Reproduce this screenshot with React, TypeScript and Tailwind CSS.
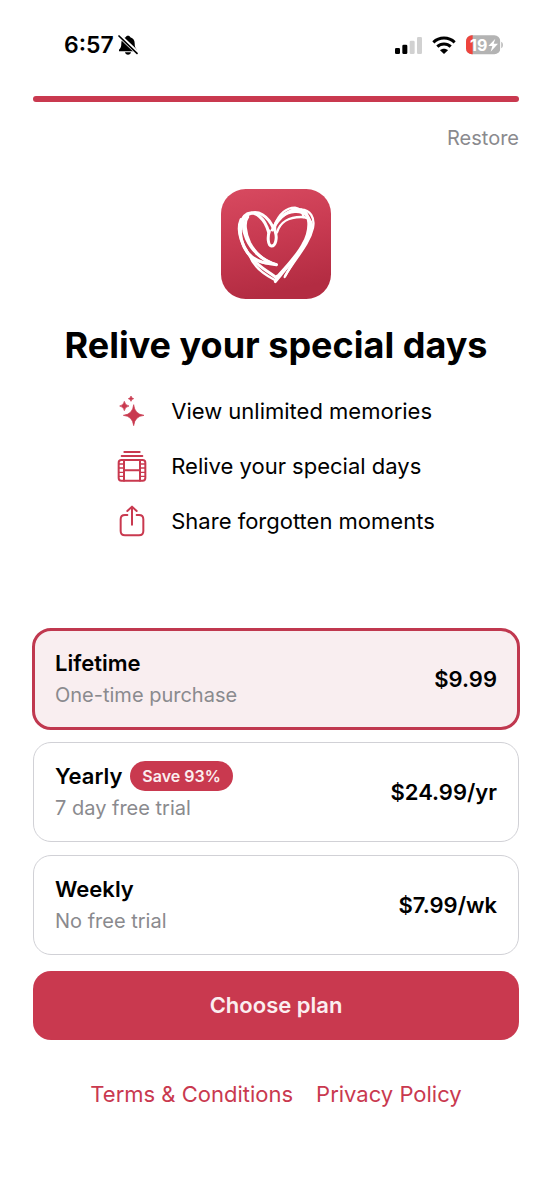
import React, { useState } from 'react';

interface Plan {
  id: string;
  name: string;
  note: string;
  price: string;
  badge?: string;
}

const PLANS: Plan[] = [
  { id: 'lifetime', name: 'Lifetime', note: 'One-time purchase', price: '$9.99' },
  { id: 'yearly', name: 'Yearly', note: '7 day free trial', price: '$24.99/yr', badge: 'Save 93%' },
  { id: 'weekly', name: 'Weekly', note: 'No free trial', price: '$7.99/wk' },
];

const BellOffIcon = () => (
  <svg viewBox="0 0 60 60" className="h-5 w-5" aria-hidden="true">
    <path d="M30 2c4 0 6 2 7 5 9 3 13 10 13 18 0 11 2 15 7 19v5H3v-5c5-4 7-8 7-19 0-8 4-15 13-18 1-3 3-5 7-5z" />
    <path d="M21 52h18c-1 4-4 7-9 7s-8-3-9-7z" />
    <path d="M3 1l56 53" stroke="#fff" strokeWidth="12" />
    <path d="M3 3l54 52" stroke="#000" strokeWidth="5" strokeLinecap="round" />
  </svg>
);

const SignalIcon = () => (
  <svg viewBox="0 0 81 51" className="h-[17px] w-[27px]" aria-hidden="true">
    <rect x="0" y="33" width="15" height="18" rx="4" />
    <rect x="22" y="23" width="15" height="28" rx="4" />
    <rect x="44" y="11" width="15" height="40" rx="4" fill="#d1d1d1" />
    <rect x="66" y="0" width="15" height="51" rx="4" fill="#d1d1d1" />
  </svg>
);

const WifiIcon = () => (
  <svg viewBox="0 0 72 54" className="h-[18px] w-6" fill="none" stroke="#000" strokeWidth="9" aria-hidden="true">
    <path d="M4 19C22 2 50 2 68 19" />
    <path d="M16 32c11-11 29-11 40 0" />
    <path d="M36 54L24 43c7-6 17-6 24 0z" fill="#000" stroke="none" />
  </svg>
);

const BatteryIcon = () => (
  <svg viewBox="0 0 114 60" className="h-5 w-[38px]" role="img" aria-label="Battery 19 percent">
    <defs>
      <clipPath id="battery">
        <rect x="0" y="1" width="103" height="57" rx="18" />
      </clipPath>
    </defs>
    <g clipPath="url(#battery)">
      <rect width="103" height="60" fill="#b3b3b3" />
      <rect width="20" height="60" fill="#ee443d" />
    </g>
    <path d="M106 20c6 2 6 17 0 20z" fill="#b3b3b3" />
    <text x="12" y="47" fontSize="48" fontWeight="700" fill="#fff" fontFamily="Inter, sans-serif">19</text>
    <path d="M88 11L67 33h12l-5 17 22-24H83z" fill="#fff" />
  </svg>
);

const AppLogo = () => (
  <svg viewBox="0 0 330 330" className="h-[110px] w-[110px]" role="img" aria-label="App logo">
    <defs>
      <linearGradient id="logo" x1="0" y1="0" x2="0.2" y2="1">
        <stop offset="0" stopColor="#d84a60" />
        <stop offset="0.5" stopColor="#c83a51" />
        <stop offset="1" stopColor="#b32c42" />
      </linearGradient>
    </defs>
    <rect width="330" height="330" rx="74" fill="url(#logo)" />
    <g fill="none" stroke="#fff" strokeWidth="9" strokeLinecap="round" strokeLinejoin="round">
      <path d="M143 130C132 88 104 66 80 74C54 88 52 136 70 176C86 208 122 224 166 227C132 217 104 196 86 162C72 132 68 98 80 84" />
      <path d="M158 120C142 80 110 60 82 76C62 88 58 104 60 120" />
      <path d="M60 92C48 120 60 158 78 188C98 222 130 240 166 266" />
      <path d="M68 86C60 132 84 172 112 198C130 214 146 222 166 227" />
      <path d="M74 180C88 214 118 222 148 224" strokeWidth="7" />
      <path d="M86 200C96 230 122 252 160 272" strokeWidth="7" />
      <path d="M145 126C139 145 141 169 151 171C164 172 169 147 163 129C158 113 163 98 179 85C205 64 240 62 258 80C274 98 268 136 250 168C230 204 198 232 176 262L163 278L168 262" />
      <path d="M154 123C173 84 206 56 240 62C268 70 272 122 246 166C228 200 198 232 168 264" />
      <path d="M160 110C174 76 196 56 222 56C236 58 244 68 248 84" strokeWidth="7" />
      <path d="M168 130C177 98 206 84 240 84C272 84 278 104 268 136C254 172 220 208 191 264" strokeWidth="7" />
      <path d="M240 62C268 62 282 86 276 116C264 168 224 206 193 260" strokeWidth="7" />
    </g>
  </svg>
);

const SparklesIcon = () => (
  <svg viewBox="0 0 90 96" className="h-8 w-[30px] shrink-0" fill="currentColor" aria-hidden="true">
    <path d="M50 29Q53 58 81 61Q53 64 50 92Q47 64 19 61Q47 58 50 29z" stroke="currentColor" strokeWidth="2" strokeLinejoin="round" />
    <path d="M22 19Q24 31 36 33Q24 35 22 47Q20 35 8 33Q20 31 22 19z" stroke="currentColor" strokeWidth="2" strokeLinejoin="round" />
    <path d="M42 3Q43 10 50 11Q43 12 42 19Q41 12 34 11Q41 10 42 3z" stroke="currentColor" strokeWidth="2" strokeLinejoin="round" />
  </svg>
);

const FilmStackIcon = () => (
  <svg viewBox="0 0 90 96" className="h-8 w-[30px] shrink-0" fill="none" stroke="currentColor" strokeWidth="6" strokeLinecap="round" aria-hidden="true">
    <path d="M22 6h46M14 18h62" />
    <rect x="5" y="30" width="80" height="62" rx="8" />
    <path d="M21 30v62M69 30v62M21 61h48" />
    <path d="M5 42h16M5 54h16M5 67h16M5 79h16M69 42h16M69 54h16M69 67h16M69 79h16" strokeWidth="4" />
  </svg>
);

const ShareIcon = () => (
  <svg viewBox="0 0 90 96" className="h-8 w-[30px] shrink-0" fill="none" stroke="currentColor" strokeWidth="6" strokeLinecap="round" strokeLinejoin="round" aria-hidden="true">
    <path d="M31 30h-7q-13 0-13 13v35q0 13 13 13h42q13 0 13-13V43q0-13-13-13h-7" />
    <path d="M45 59V6M31 18L45 5l14 13" />
  </svg>
);

const FEATURES = [
  { icon: <SparklesIcon />, text: 'View unlimited memories' },
  { icon: <FilmStackIcon />, text: 'Relive your special days' },
  { icon: <ShareIcon />, text: 'Share forgotten moments' },
];

interface PlanCardProps {
  plan: Plan;
  selected: boolean;
  onSelect: (id: string) => void;
}

const PlanCard: React.FC<PlanCardProps> = ({ plan, selected, onSelect }) => (
  <label
    className={`relative flex min-h-[100px] cursor-pointer items-center justify-between rounded-[18px] px-[22px] outline-solid ${
      selected ? 'bg-[#f9eef0] outline-3 -outline-offset-2 outline-[#c0384f]' : 'bg-white outline-1 -outline-offset-1 outline-[#d1d1d6]'
    }`}
  >
    <input
      type="radio"
      name="plan"
      value={plan.id}
      checked={selected}
      onChange={() => onSelect(plan.id)}
      className="sr-only"
    />
    <span className="flex flex-col">
      <span className="flex h-8 items-center gap-2 text-[22px] font-semibold">
        {plan.name}
        {plan.badge && (
          <span className="rounded-full bg-[#c9394f] px-3 text-base leading-[30px] font-semibold text-[#fbeef0]">
            {plan.badge}
          </span>
        )}
      </span>
      <span className="text-xl leading-8 text-[#8a8a8e]">{plan.note}</span>
    </span>
    <span className="text-[22px] font-semibold">{plan.price}</span>
  </label>
);

const App: React.FC = () => {
  const [selectedPlan, setSelectedPlan] = useState('lifetime');

  return (
    <div className="min-h-screen bg-white font-[Inter,sans-serif] text-black">
      <header className="flex h-24 items-start justify-between pt-[34px] pr-12 pl-16">
        <div className="flex items-center gap-1">
          <span className="text-[23px] leading-[22px] font-semibold">6:57</span>
          <BellOffIcon />
        </div>
        <div className="flex h-[22px] items-center gap-[10px]">
          <SignalIcon />
          <WifiIcon />
          <BatteryIcon />
        </div>
      </header>

      <main className="px-[33px]">
        <div
          role="progressbar"
          aria-label="Progress"
          aria-valuenow={100}
          className="h-[6px] rounded-full bg-[#c9394f]"
        />
        <div className="mt-5 flex justify-end">
          <button type="button" className="text-xl leading-8 text-[#8a8a8e]">Restore</button>
        </div>

        <div className="mt-[35px] flex flex-col items-center">
          <AppLogo />
          <h1 className="mt-6 text-center text-[36px] leading-[44px] font-bold whitespace-nowrap">
            Relive your special days
          </h1>
          <ul className="mt-7 flex flex-col gap-[23px]">
            {FEATURES.map(feature => (
              <li key={feature.text} className="flex items-center gap-6 text-[#c9394f]">
                {feature.icon}
                <span className="text-[22px] leading-8 text-black">{feature.text}</span>
              </li>
            ))}
          </ul>
        </div>

        <div role="radiogroup" aria-label="Plans" className="mt-[92px] flex flex-col gap-[13px]">
          {PLANS.map(plan => (
            <PlanCard
              key={plan.id}
              plan={plan}
              selected={plan.id === selectedPlan}
              onSelect={setSelectedPlan}
            />
          ))}
        </div>

        <button
          type="button"
          className="mt-4 h-[69px] w-full rounded-[18px] bg-[#c9394f] text-[22px] font-semibold text-[#fbeef0]"
        >
          Choose plan
        </button>

        <nav className="mt-[38px] flex justify-center gap-[23px] pb-8 text-[22px] leading-8 text-[#c9394f]">
          <a href="#terms">Terms &amp; Conditions</a>
          <a href="#privacy">Privacy Policy</a>
        </nav>
      </main>
    </div>
  );
};

export default App;
